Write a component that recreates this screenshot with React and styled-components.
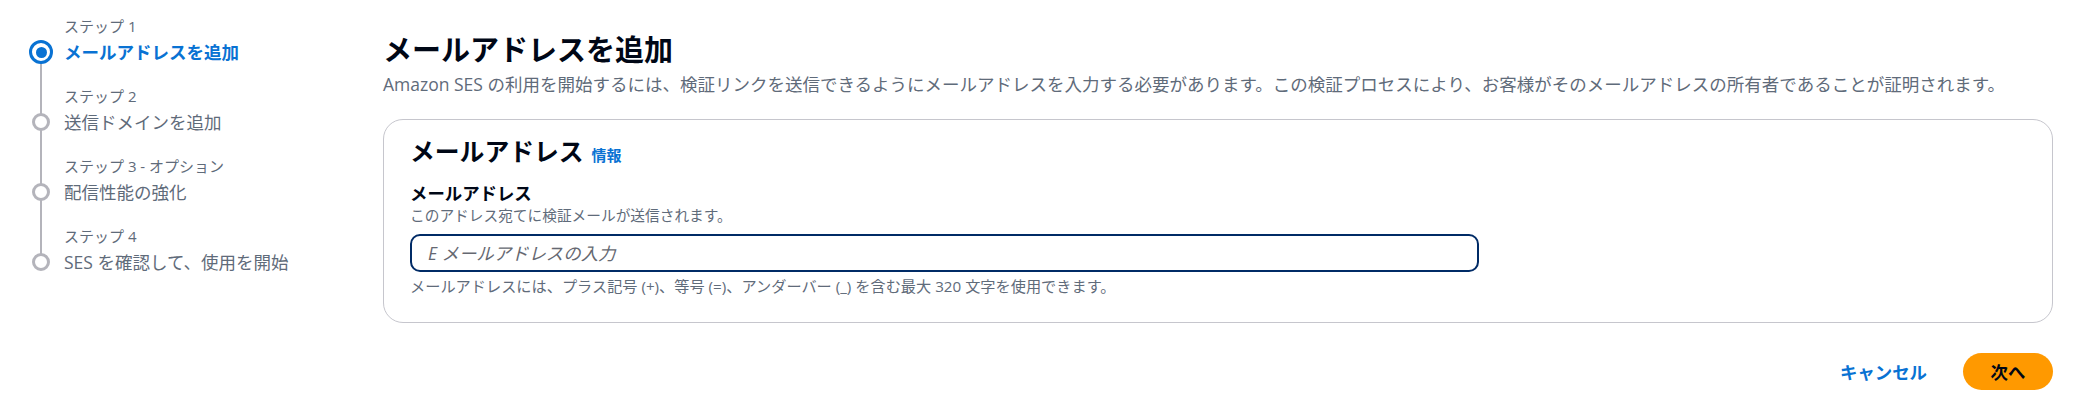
import React from "react";
import styled, { createGlobalStyle } from "styled-components";

const Global = createGlobalStyle`
  html, body { margin: 0; padding: 0; background: #ffffff; }
  body {
    font-family: "Open Sans", "Noto Sans CJK JP", sans-serif;
    color: #000716;
  }
  * { box-sizing: border-box; }
`;

const Page = styled.div`
  display: grid;
  grid-template-columns: 383px 1fr;
  padding-right: 27px;
  min-height: 413px;
`;

const Nav = styled.nav`
  padding: 15px 0 0 29px;
`;

const StepList = styled.ol`
  list-style: none;
  margin: 0;
  padding: 0;
  display: flex;
  flex-direction: column;
  gap: 18px;
`;

const Step = styled.li`
  position: relative;
  display: grid;
  grid-template-columns: 24px 1fr;
  grid-template-rows: 22px 30px;
  column-gap: 11px;

  &:not(:last-child)::after {
    content: "";
    position: absolute;
    left: 11px;
    top: 37px;
    width: 2px;
    height: 70px;
    background: #b4b4bb;
    z-index: 0;
  }
`;

const StepLabel = styled.span`
  grid-column: 2;
  grid-row: 1;
  font-size: 15px;
  line-height: 22px;
  color: #5f6b7a;
  white-space: nowrap;
`;

const Rail = styled.span`
  grid-column: 1;
  grid-row: 2;
  display: flex;
  align-items: center;
  justify-content: center;
  position: relative;
  z-index: 1;
`;

const Dot = styled.span`
  display: flex;
  align-items: center;
  justify-content: center;
  border-radius: 50%;
  background: #ffffff;
  width: ${(p) => (p.$active ? 24 : 18)}px;
  height: ${(p) => (p.$active ? 24 : 18)}px;
  border: 3px solid ${(p) => (p.$active ? "#0972d3" : "#b4b4bb")};

  &::before {
    content: "";
    display: ${(p) => (p.$active ? "block" : "none")};
    width: 11px;
    height: 11px;
    border-radius: 50%;
    background: #0972d3;
  }
`;

const StepTitle = styled.span`
  grid-column: 2;
  grid-row: 2;
  font-size: 17.5px;
  line-height: 30px;
  white-space: nowrap;
  color: ${(p) => (p.$active ? "#0972d3" : "#5f6b7a")};
  font-weight: ${(p) => (p.$active ? 700 : 400)};
`;

const Main = styled.main`
  padding-top: 32px;
  display: flex;
  flex-direction: column;
`;

const Title = styled.h1`
  margin: 0;
  font-size: 29px;
  line-height: 36px;
  font-weight: 700;
  color: #000716;
`;

const Description = styled.p`
  margin: 4px 0 0;
  font-size: 17.5px;
  line-height: 24px;
  color: #5f6b7a;
  white-space: nowrap;
`;

const Container = styled.section`
  margin-top: 23px;
  border: 1px solid #c6c6cd;
  border-radius: 20px;
  padding: 15px 26px 26px;
`;

const ContainerHeader = styled.div`
  display: flex;
  align-items: baseline;
  gap: 8px;
`;

const ContainerTitle = styled.h2`
  margin: 0;
  font-size: 24.8px;
  line-height: 32px;
  font-weight: 700;
  color: #000716;
`;

const InfoLink = styled.a`
  font-size: 15px;
  font-weight: 700;
  color: #0972d3;
  text-decoration: none;
`;

const Field = styled.div`
  margin-top: 15px;
  display: flex;
  flex-direction: column;
`;

const Label = styled.label`
  font-size: 17.4px;
  line-height: 22px;
  font-weight: 700;
  color: #000716;
`;

const FieldDescription = styled.span`
  font-size: 14.7px;
  line-height: 22px;
  color: #5f6b7a;
`;

const Input = styled.input`
  margin-top: 8px;
  width: calc(66.667% - 8px);
  height: 38px;
  border: 2px solid #002b66;
  border-radius: 10px;
  padding: 0 16px;
  font-family: inherit;
  font-size: 17.4px;
  color: #000716;
  outline: none;
  background: #ffffff;

  &::placeholder {
    color: #656871;
    font-style: italic;
  }
`;

const Constraint = styled.span`
  margin-top: 4px;
  font-size: 15.2px;
  line-height: 20px;
  color: #5f6b7a;
`;

const Footer = styled.div`
  margin-top: 28px;
  display: flex;
  justify-content: flex-end;
  align-items: center;
  gap: 16px;
`;

const LinkButton = styled.button`
  border: none;
  background: none;
  padding: 8px 20px;
  font-family: inherit;
  font-size: 17.4px;
  font-weight: 700;
  color: #0972d3;
  cursor: pointer;
`;

const PrimaryButton = styled.button`
  border: none;
  background: #ff9900;
  border-radius: 20px;
  height: 37px;
  width: 90px;
  font-family: inherit;
  font-size: 17.4px;
  font-weight: 700;
  color: #000716;
  cursor: pointer;
`;

const steps = [
  { label: "ステップ 1", title: "メールアドレスを追加", active: true },
  { label: "ステップ 2", title: "送信ドメインを追加" },
  { label: "ステップ 3 - オプション", title: "配信性能の強化" },
  { label: "ステップ 4", title: "SES を確認して、使用を開始" },
];

export default function App() {
  return (
    <>
      <Global />
      <Page>
        <Nav>
          <StepList>
            {steps.map((s) => (
              <Step key={s.label}>
                <StepLabel>{s.label}</StepLabel>
                <Rail>
                  <Dot $active={s.active} />
                </Rail>
                <StepTitle $active={s.active}>{s.title}</StepTitle>
              </Step>
            ))}
          </StepList>
        </Nav>
        <Main>
          <Title>メールアドレスを追加</Title>
          <Description>
            Amazon SES の利用を開始するには、検証リンクを送信できるようにメールアドレスを入力する必要があります。この検証プロセスにより、お客様がそのメールアドレスの所有者であることが証明されます。
          </Description>
          <Container>
            <ContainerHeader>
              <ContainerTitle>メールアドレス</ContainerTitle>
              <InfoLink href="#">情報</InfoLink>
            </ContainerHeader>
            <Field>
              <Label htmlFor="email">メールアドレス</Label>
              <FieldDescription>このアドレス宛てに検証メールが送信されます。</FieldDescription>
              <Input id="email" placeholder="E メールアドレスの入力" />
              <Constraint>
                メールアドレスには、プラス記号 (+)、等号 (=)、アンダーバー (_) を含む最大 320 文字を使用できます。
              </Constraint>
            </Field>
          </Container>
          <Footer>
            <LinkButton>キャンセル</LinkButton>
            <PrimaryButton>次へ</PrimaryButton>
          </Footer>
        </Main>
      </Page>
    </>
  );
}
